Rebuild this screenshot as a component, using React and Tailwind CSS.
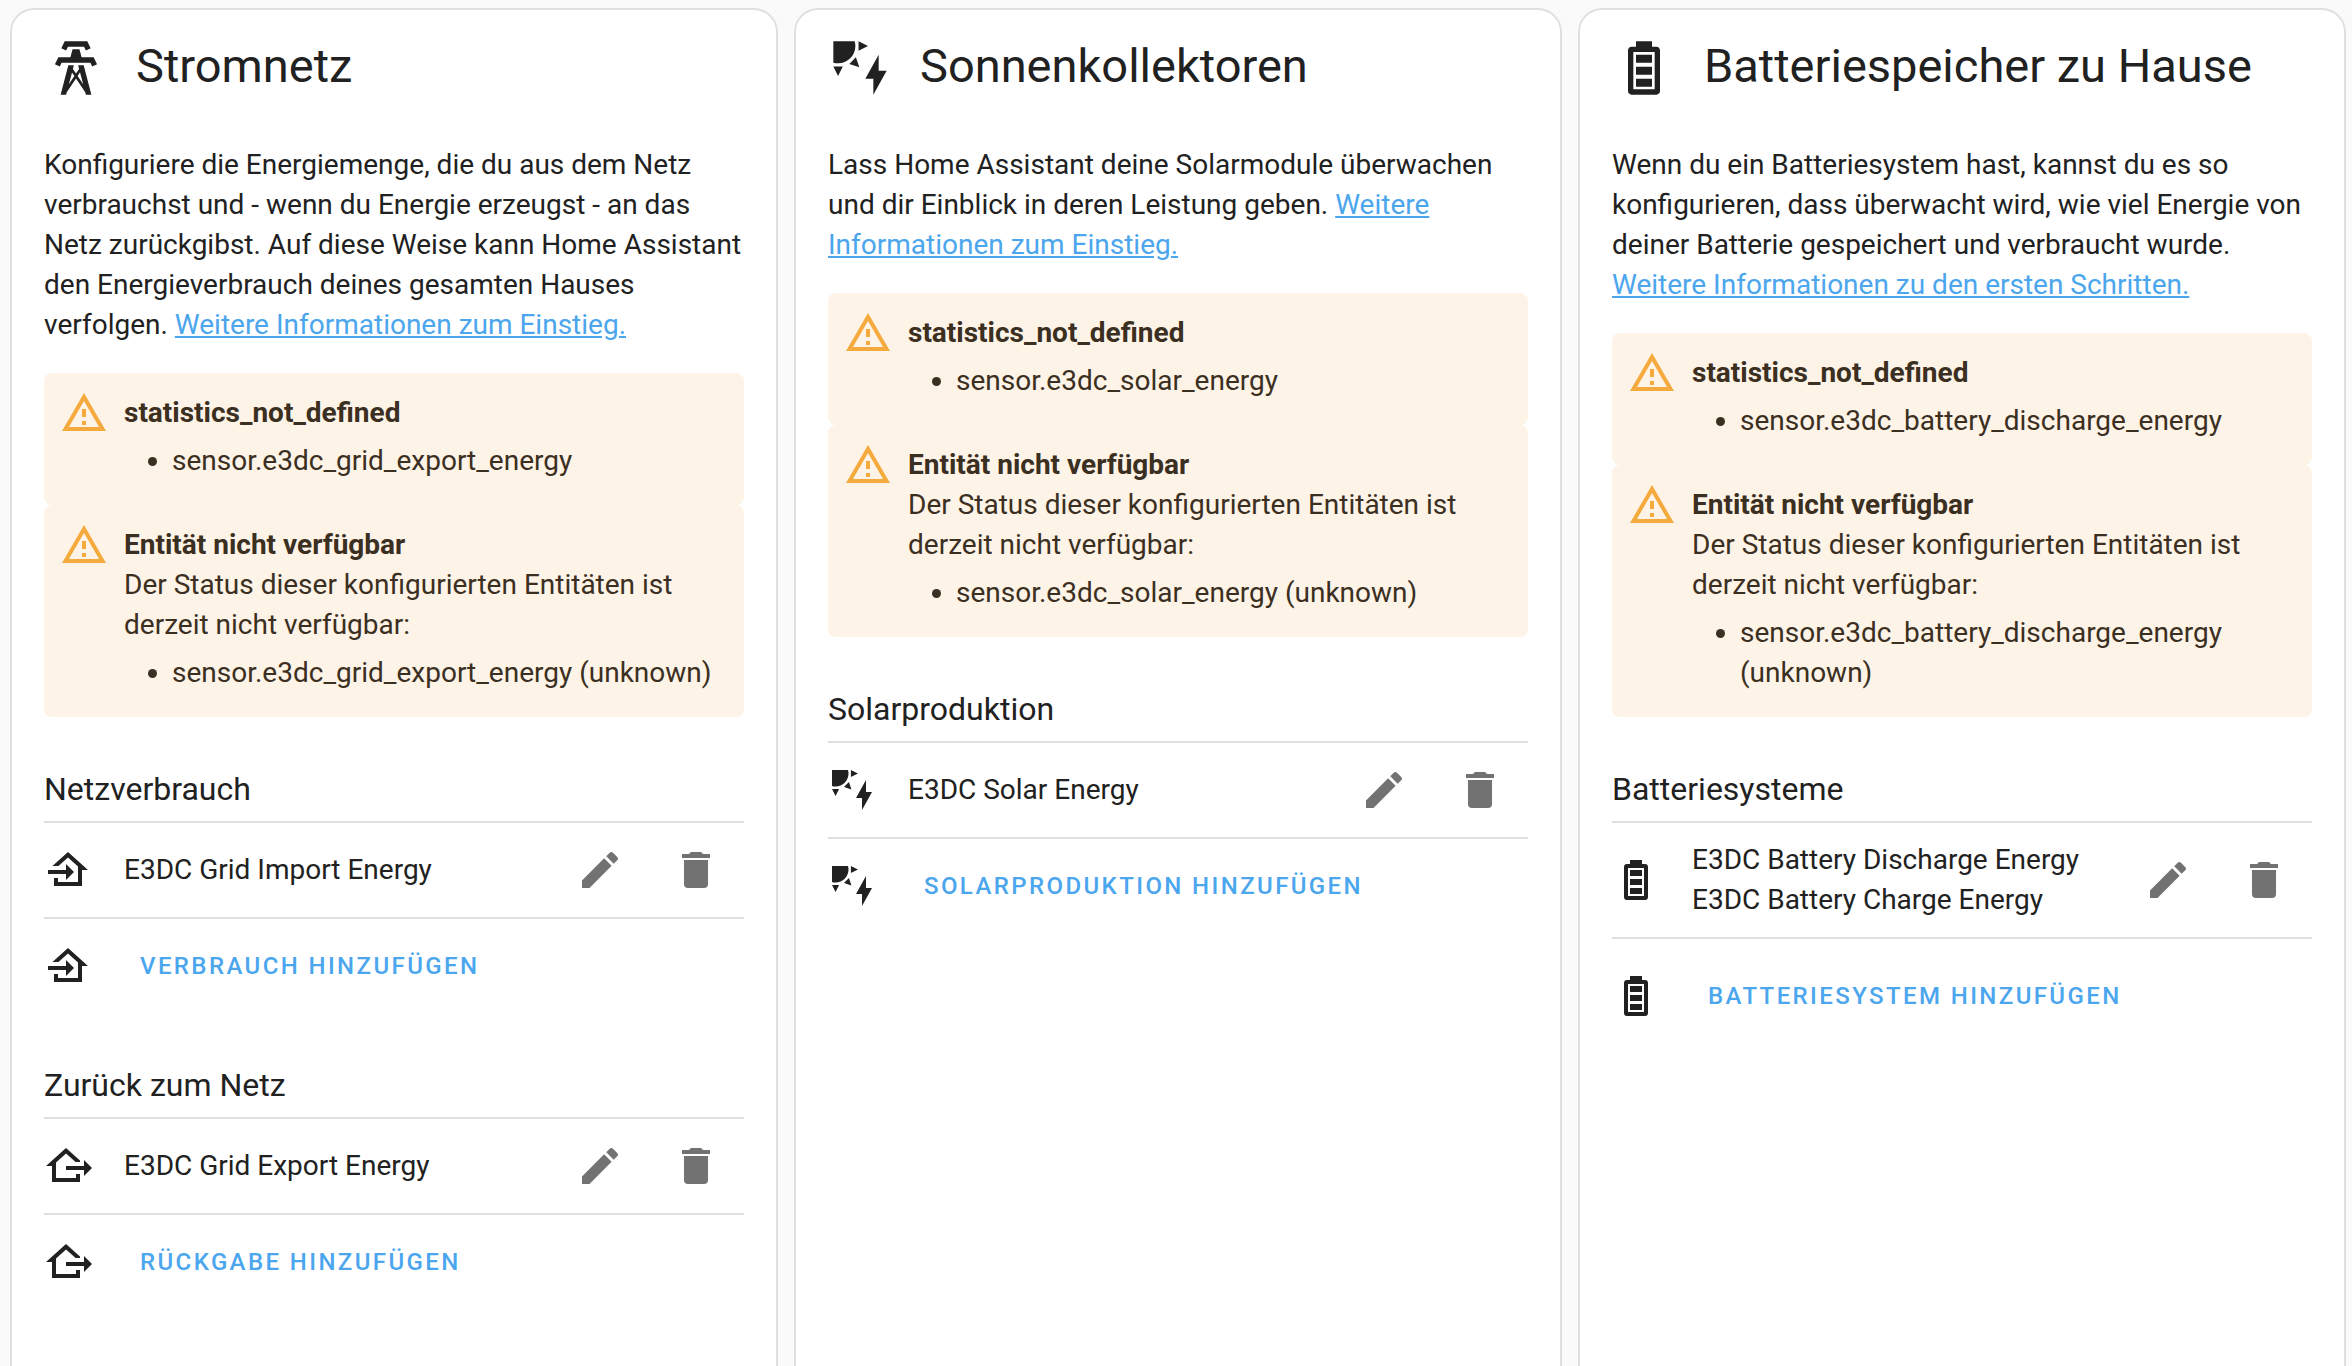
const ICONS = {
  tower:
    "M8.28,5.45L6.5,4.55L7.76,2H16.23L17.5,4.55L15.72,5.44L15,4H9L8.28,5.45M18.62,8H14.09L13.3,5H10.7L9.91,8H5.38L4.1,10.55L5.89,11.44L6.62,10H17.38L18.1,11.45L19.89,10.56L18.62,8M17.77,22H15.7L15.46,21.1L12,15.9L8.53,21.1L8.3,22H6.23L9.12,11H11.19L10.83,12.35L12,14.1L13.16,12.35L12.81,11H14.88L17.77,22M11.4,15L10.5,13.65L9.32,18.13L11.4,15M14.68,18.12L13.5,13.64L12.6,15L14.68,18.12Z",
  solar:
    "M11.45,2V5.55L15,3.77L11.45,2M10.45,8L8,10.46L11.75,11.71L10.45,8M2,11.45L3.77,15L5.55,11.45H2M10,2H2V10C2.57,10.17 3.17,10.25 3.77,10.25C7.35,10.26 10.26,7.35 10.27,3.75C10.26,3.16 10.17,2.57 10,2M17,22V16H14L19,7V13H22L17,22Z",
  battery:
    "M16,20H8V6H16M16.67,4H15V2H9V4H7.33C6.6,4 6,4.6 6,5.33V20.67C6,21.4 6.6,22 7.33,22H16.67C17.41,22 18,21.41 18,20.67V5.33C18,4.6 17.4,4 16.67,4M15,16H9V19H15V16M15,7H9V10H15V7M15,11.5H9V14.5H15V11.5Z",
  homeImport:
    "M15,13L11,17V14H2V12H11V9L15,13M5,20V16H7V18H17V10.19L12,5.69L7.21,10H4.22L12,3L22,12H19V20H5Z",
  homeExport:
    "M24,13L20,17V14H11V12H20V9L24,13M4,20V12H1L11,3L18,9.3V10H15.79L11,5.69L6,10.19V18H16V16H18V20H4Z",
  alert:
    "M12,2L1,21H23M12,6L19.53,19H4.47M11,10V14H13V10M11,16V18H13V16",
  pencil:
    "M20.71,7.04C21.1,6.65 21.1,6 20.71,5.63L18.37,3.29C18,2.9 17.35,2.9 16.96,3.29L15.12,5.12L18.87,8.87M3,17.25V21H6.75L17.81,9.93L14.06,6.18L3,17.25Z",
  trash:
    "M19,4H15.5L14.5,3H9.5L8.5,4H5V6H19M6,19A2,2 0 0,0 8,21H16A2,2 0 0,0 18,19V7H6V19Z",
};

function Icon({ name, className = "size-12" }) {
  return (
    <svg viewBox="0 0 24 24" fill="currentColor" aria-hidden="true" className={`shrink-0 ${className}`}>
      <path d={ICONS[name]} />
    </svg>
  );
}

const CARDS = [
  {
    title: "Stromnetz",
    icon: "tower",
    text: "Konfiguriere die Energiemenge, die du aus dem Netz verbrauchst und - wenn du Energie erzeugst - an das Netz zurückgibst. Auf diese Weise kann Home Assistant den Energieverbrauch deines gesamten Hauses verfolgen.",
    link: "Weitere Informationen zum Einstieg.",
    sensor: "sensor.e3dc_grid_export_energy",
    sections: [
      {
        title: "Netzverbrauch",
        icon: "homeImport",
        entities: ["E3DC Grid Import Energy"],
        add: "Verbrauch hinzufügen",
      },
      {
        title: "Zurück zum Netz",
        icon: "homeExport",
        entities: ["E3DC Grid Export Energy"],
        add: "Rückgabe hinzufügen",
      },
    ],
  },
  {
    title: "Sonnenkollektoren",
    icon: "solar",
    text: "Lass Home Assistant deine Solarmodule überwachen und dir Einblick in deren Leistung geben.",
    link: "Weitere Informationen zum Einstieg.",
    sensor: "sensor.e3dc_solar_energy",
    sections: [
      {
        title: "Solarproduktion",
        icon: "solar",
        entities: ["E3DC Solar Energy"],
        add: "Solarproduktion hinzufügen",
      },
    ],
  },
  {
    title: "Batteriespeicher zu Hause",
    icon: "battery",
    text: "Wenn du ein Batteriesystem hast, kannst du es so konfigurieren, dass überwacht wird, wie viel Energie von deiner Batterie gespeichert und verbraucht wurde.",
    link: "Weitere Informationen zu den ersten Schritten.",
    sensor: "sensor.e3dc_battery_discharge_energy",
    sections: [
      {
        title: "Batteriesysteme",
        icon: "battery",
        entities: ["E3DC Battery Discharge Energy", "E3DC Battery Charge Energy"],
        add: "Batteriesystem hinzufügen",
        tall: true,
      },
    ],
  },
];

function Alert({ title, children, item }) {
  return (
    <div role="alert" className="flex gap-4 rounded-lg bg-[#fef3e7] px-4 pt-4 pb-6 text-[#3b2f22]">
      <Icon name="alert" className="size-12 text-[#f4aa3c]" />
      <div className="min-w-0 flex-1 pt-1">
        <div className="font-bold">{title}</div>
        {children}
        <ul className="mt-2 list-disc pl-12">
          <li>{item}</li>
        </ul>
      </div>
    </div>
  );
}

function IconButton({ icon, label }) {
  return (
    <button type="button" aria-label={label} className="grid size-24 shrink-0 place-items-center text-[#727272]">
      <Icon name={icon} />
    </button>
  );
}

function Section({ title, icon, entities, add, tall }) {
  const height = tall ? "h-[114px]" : "h-[94px]";
  return (
    <section className="mt-[52px]">
      <h3 className="border-b-2 border-[#e0e0e0] pb-3 text-[32px] leading-10">{title}</h3>
      <div className="border-b-2 border-[#e0e0e0]">
        <div className={`flex items-center ${height}`}>
          <Icon name={icon} />
          <div className="ml-8 min-w-0 flex-1">
            {entities.map((entity) => (
              <div key={entity}>{entity}</div>
            ))}
          </div>
          <IconButton icon="pencil" label={`${title} bearbeiten`} />
          <IconButton icon="trash" label={`${title} löschen`} />
        </div>
      </div>
      <div className={`flex items-center ${height}`}>
        <Icon name={icon} />
        <button
          type="button"
          className="ml-8 px-4 text-2xl leading-[72px] font-medium tracking-widest text-[#4ba6ee] uppercase"
        >
          {add}
        </button>
      </div>
    </section>
  );
}

function Card({ title, icon, text, link, sensor, sections }) {
  return (
    <article className="min-w-0 rounded-t-3xl border-2 border-b-0 border-[#e0e0e0] bg-white px-8 pt-[26px]">
      <header className="flex gap-7">
        <Icon name={icon} className="size-16" />
        <h2 className="text-[47px] leading-[60px]">{title}</h2>
      </header>
      <p className="mt-[45px] mb-7">
        {text}{" "}
        <a href="#info" className="text-[#4ba6ee] underline">
          {link}
        </a>
      </p>
      <Alert title="statistics_not_defined" item={sensor} />
      <Alert title="Entität nicht verfügbar" item={`${sensor} (unknown)`}>
        <div>Der Status dieser konfigurierten Entitäten ist derzeit nicht verfügbar:</div>
      </Alert>
      {sections.map((section) => (
        <Section key={section.title} {...section} />
      ))}
    </article>
  );
}

export default function App() {
  return (
    <main className="grid h-screen grid-cols-3 gap-4 overflow-hidden bg-[#fafafa] pt-2 pr-1.5 pl-2.5 font-['Roboto',sans-serif] text-[28px] leading-10 text-[#212121]">
      {CARDS.map((card) => (
        <Card key={card.title} {...card} />
      ))}
    </main>
  );
}
